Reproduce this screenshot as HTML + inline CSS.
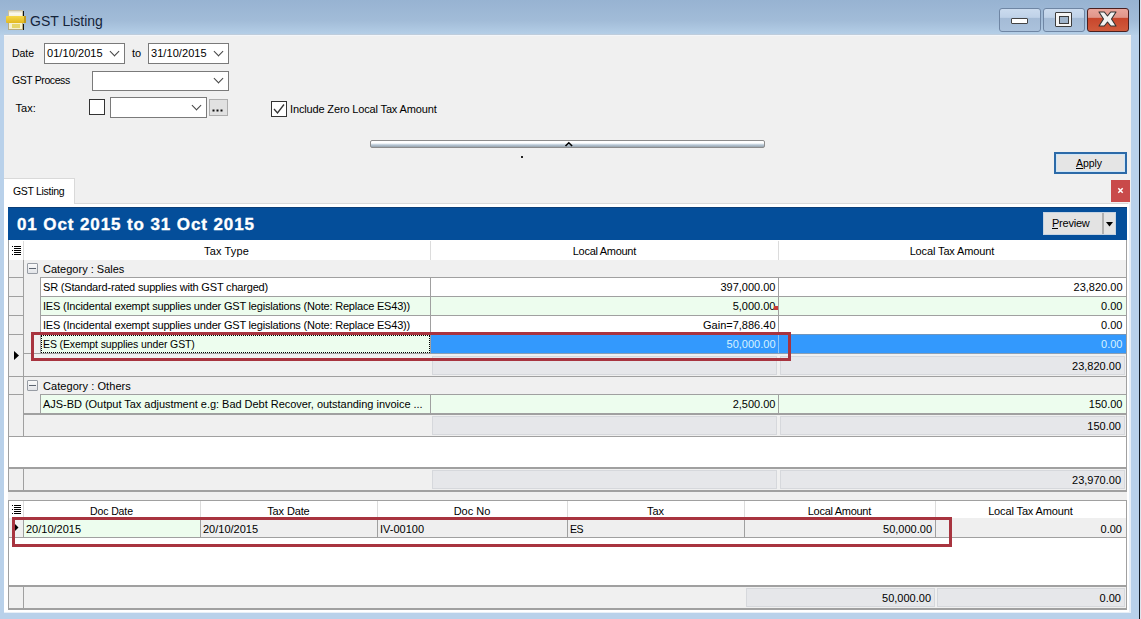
<!DOCTYPE html>
<html><head><meta charset="utf-8">
<style>
*{margin:0;padding:0;box-sizing:border-box}
html,body{width:1141px;height:619px;overflow:hidden;background:#b9d1ea;font-family:"Liberation Sans",sans-serif;font-size:11px;color:#000}
.a{position:absolute}
.t{position:absolute;white-space:nowrap;line-height:13px}
#title{left:0;top:0;width:1141px;height:35px;background:linear-gradient(#97b3d2,#a2bcd8 60%,#b6d0e8)}
#client{left:4px;top:35px;width:1127px;height:578px;background:#f0f0f0}
.box{position:absolute;background:#fff;border:1px solid #7a7a7a}
.chev{position:absolute;width:7px;height:7px;border-right:1px solid #444;border-bottom:1px solid #444;transform:rotate(45deg)}
.hl{position:absolute;height:1px;background:#a0a0a0}
.vl{position:absolute;width:1px;background:#a0a0a0}
.r{text-align:right}.c{text-align:center}
.sum{position:absolute;background:#e8e8e8;border:1px solid #d6d6d6}
</style></head><body><div id="title" class="a"></div>
<div id="client" class="a"></div>
<div class="a" style="left:1139px;top:0px;width:1px;height:619px;background:#141c26"></div>
<div class="a" style="left:1140px;top:0px;width:1px;height:619px;background:#dfe6ee"></div>
<div class="a" style="left:4px;top:34px;width:1127px;height:1px;background:#bfcddc"></div>
<div class="a" style="left:4px;top:35px;width:1127px;height:1px;background:#f3f6fa"></div>
<div class="a" style="left:8px;top:10px;width:15px;height:7px;background:linear-gradient(#dcd6c0,#fbf8ea 40%,#f4f0dc);border:1px solid #c8c0a0;border-bottom:none"></div>
<div class="a" style="left:23px;top:11px;width:1px;height:5px;background:#111"></div>
<div class="a" style="left:8px;top:22px;width:15px;height:8px;background:#f6f1cf;border:1px solid #b8ac80"></div>
<div class="a" style="left:12px;top:24px;width:8px;height:4px;background:#e6d66a"></div>
<div class="a" style="left:23px;top:24px;width:1px;height:6px;background:#111"></div>
<div class="a" style="left:6px;top:16px;width:20px;height:7px;background:linear-gradient(#f6d848,#e2b820);border-radius:1px"></div>
<div class="a" style="left:24px;top:16px;width:2px;height:7px;background:#c09a22"></div>
<div class="t" style="left:30px;top:13px;font-size:14px;line-height:17px;color:#15243a">GST Listing</div>
<div class="a" style="left:999px;top:8px;width:42px;height:24px;border:1px solid #6f86a4;border-radius:3px;background:linear-gradient(#cbdbee 0,#bfd2e8 38%,#a4bbd6 42%,#abc2dc 100%)"></div>
<div class="a" style="left:1011px;top:18px;width:17px;height:6px;background:#fff;border:1px solid #444;border-radius:1px"></div>
<div class="a" style="left:1043px;top:8px;width:42px;height:24px;border:1px solid #6f86a4;border-radius:3px;background:linear-gradient(#cbdbee 0,#bfd2e8 38%,#a4bbd6 42%,#abc2dc 100%)"></div>
<div class="a" style="left:1055px;top:12px;width:17px;height:15px;background:#f4f4f4;border:1px solid #3c3c3c;border-radius:1px"></div>
<div class="a" style="left:1059px;top:16px;width:10px;height:8px;background:#9fb4cb;border:1px solid #3c3c3c"></div>
<div class="a" style="left:1087px;top:8px;width:42px;height:24px;border:1px solid #4a2020;border-radius:3px;background:linear-gradient(#eaa69c 0,#e0968a 38%,#c8462c 42%,#d05a3c 100%)"></div>
<svg class="a" style="left:1098px;top:11px" width="19" height="16"><path d="M1 1 L6.3 1 L9.5 5 L12.7 1 L18 1 L13.5 8 L18 15 L12.7 15 L9.5 11 L6.3 15 L1 15 L5.5 8 Z" fill="#f2f2f2" stroke="#333" stroke-width="1.1" stroke-linejoin="round"/></svg>
<div class="t" style="left:12px;top:47px;letter-spacing:-0.026px;font-size:10.5px;">Date</div>
<div class="box" style="left:44px;top:43px;width:81px;height:21px"></div>
<div class="t" style="left:47px;top:47px;letter-spacing:0.061px;">01/10/2015</div>
<div class="chev" style="left:111px;top:48px"></div>
<div class="t" style="left:132px;top:47px;">to</div>
<div class="box" style="left:148px;top:43px;width:81px;height:21px"></div>
<div class="t" style="left:151px;top:47px;letter-spacing:0.061px;">31/10/2015</div>
<div class="chev" style="left:215px;top:48px"></div>
<div class="t" style="left:12px;top:74px;letter-spacing:-0.403px;font-size:10.5px;">GST Process</div>
<div class="box" style="left:92px;top:71px;width:137px;height:20px"></div>
<div class="chev" style="left:215px;top:75px"></div>
<div class="t" style="left:15.5px;top:102px;letter-spacing:0.075px;">Tax:</div>
<div class="box" style="left:89px;top:99px;width:16px;height:16px;border-color:#333"></div>
<div class="box" style="left:110px;top:97px;width:97px;height:21px"></div>
<div class="chev" style="left:193px;top:102px"></div>
<div class="a" style="left:209px;top:99px;width:19px;height:17px;background:#e1e1e1;border:1px solid #adadad"></div>
<svg class="a" style="left:209px;top:99px" width="19" height="17"><path d="M3.5 11.5h2M7.5 11.5h2M11.5 11.5h2" stroke="#111" stroke-width="2"/></svg>
<div class="box" style="left:271px;top:101px;width:16px;height:16px;border-color:#333"></div>
<svg class="a" style="left:271px;top:101px" width="16" height="16"><path d="M3 8 L6.5 12 L13 3.5" stroke="#333" stroke-width="1.3" fill="none"/></svg>
<div class="t" style="left:290px;top:103px;letter-spacing:-0.148px;">Include Zero Local Tax Amount</div>
<div class="a" style="left:370px;top:140px;width:395px;height:8px;border:1px solid #8c8c8c;border-radius:2px;background:linear-gradient(#fff 0,#fff 35%,#b8c8d6 65%,#98a4ae 100%)"></div>
<svg class="a" style="left:564px;top:141px" width="10" height="6"><path d="M1.5 5 L4.8 1.8 L8.1 5" stroke="#000" stroke-width="1.6" fill="none"/></svg>
<div class="a" style="left:521px;top:156px;width:2px;height:2px;background:#222"></div>
<div class="a" style="left:1054px;top:152px;width:73px;height:22px;border:2px solid #2c6aa8;background:#e5e5e5;box-shadow:inset 0 0 0 1px #cfe6f8"></div>
<div class="t" style="left:1076px;top:157px;letter-spacing:-0.066px;font-size:10.5px;">Apply</div>
<div class="a" style="left:1076px;top:168px;width:7px;height:1px;background:#000"></div>
<div class="a" style="left:4px;top:178px;width:71px;height:26px;background:#fff;border:1px solid #d9d9d9;border-bottom:none;border-left:none"></div>
<div class="t" style="left:13px;top:185px;letter-spacing:-0.315px;font-size:10.5px;">GST Listing</div>
<div class="a" style="left:1111px;top:180px;width:19px;height:22px;background:#c94a4a"></div>
<svg class="a" style="left:1111px;top:180px" width="19" height="22"><path d="M7.3 8.3 L11.7 12.7 M11.7 8.3 L7.3 12.7" stroke="#fff" stroke-width="1.5"/></svg>
<div class="a" style="left:75px;top:203px;width:1053px;height:1px;background:#d9d9d9"></div>
<div class="a" style="left:4px;top:204px;width:1125px;height:408px;background:#fff"></div>
<div class="a" style="left:1129px;top:204px;width:2px;height:409px;background:#e8eff7"></div>
<div class="a" style="left:4px;top:612px;width:1125px;height:1px;background:#e8eff7"></div>
<div class="a" style="left:8px;top:207px;width:1119px;height:33px;background:#044e9a;border-top:1px solid #0a3e78"></div>
<div class="t" style="left:17px;top:215px;letter-spacing:0.899px;font-size:17px;line-height:20px;font-weight:bold;color:#fff;-webkit-text-stroke:0.35px #fff">01 Oct 2015 to 31 Oct 2015</div>
<div class="a" style="left:1043px;top:212px;width:73px;height:23px;background:#e3e3e3;border:1px solid #c5d3e2"></div>
<div class="a" style="left:1102px;top:213px;width:2px;height:21px;background:#b0b0b0"></div>
<div class="t" style="left:1052px;top:217px;letter-spacing:-0.221px;">Preview</div>
<div class="a" style="left:1052px;top:228px;width:6px;height:1px;background:#000"></div>
<svg class="a" style="left:1106px;top:222px" width="8" height="5"><path d="M0 0 H7 L3.5 4.5 Z" fill="#000"/></svg>
<div class="a" style="left:8px;top:240px;width:1119px;height:252px;background:#fff"></div>
<div class="a" style="left:8px;top:240px;width:1px;height:252px;background:#a0a0a0"></div>
<div class="a" style="left:1126px;top:240px;width:1px;height:252px;background:#a0a0a0"></div>
<div class="a" style="left:23px;top:241px;width:1px;height:19px;background:#dcdcdc"></div>
<div class="a" style="left:430px;top:241px;width:1px;height:19px;background:#dcdcdc"></div>
<div class="a" style="left:778px;top:241px;width:1px;height:19px;background:#dcdcdc"></div>
<svg class="a" style="left:12px;top:246px" width="10" height="10"><path d="M2 0.5h7M2 2.5h7M2 4.5h7M2 6.5h7M2 8.5h7" stroke="#000" stroke-width="1"/><path d="M0 0.5h1M0 4.5h1M0 8.5h1" stroke="#000" stroke-width="1"/></svg>
<div class="t c" style="left:26.570px;width:400px;top:245px;letter-spacing:0.140px;">Tax Type</div>
<div class="t c" style="left:404.352px;width:400px;top:245px;letter-spacing:-0.297px;">Local Amount</div>
<div class="t c" style="left:751.935px;width:400px;top:245px;letter-spacing:-0.129px;">Local Tax Amount</div>
<div class="a" style="left:9px;top:260px;width:1117px;height:18px;background:#f0f0f0"></div>
<div class="a" style="left:23px;top:260px;width:1px;height:18px;background:#a0a0a0"></div>
<div class="a" style="left:9px;top:277px;width:14px;height:1px;background:#a0a0a0"></div>
<div class="a" style="left:27px;top:263px;width:11px;height:11px;border:1px solid #979ca4;border-radius:1px;background:linear-gradient(#fafafa,#e2e4e8)"></div>
<div class="a" style="left:29px;top:268px;width:7px;height:1px;background:#5c6470"></div>
<div class="t" style="left:43px;top:263px;">Category : Sales</div>
<div class="a" style="left:24px;top:277px;width:1102px;height:1px;background:#a0a0a0"></div>
<div class="a" style="left:9px;top:278px;width:14px;height:18px;background:#f0f0f0"></div>
<div class="a" style="left:9px;top:296px;width:14px;height:1px;background:#a0a0a0"></div>
<div class="a" style="left:23px;top:277px;width:1px;height:19px;background:#a0a0a0"></div>
<div class="a" style="left:24px;top:277px;width:16px;height:19px;background:#f0f0f0"></div>
<div class="a" style="left:41px;top:278px;width:389px;height:18px;background:#fff"></div>
<div class="a" style="left:431px;top:278px;width:347px;height:18px;background:#fff"></div>
<div class="a" style="left:779px;top:278px;width:347px;height:18px;background:#fff"></div>
<div class="a" style="left:40px;top:277px;width:1px;height:19px;background:#a0a0a0"></div>
<div class="a" style="left:430px;top:277px;width:1px;height:19px;background:#a0a0a0"></div>
<div class="a" style="left:778px;top:277px;width:1px;height:19px;background:#a0a0a0"></div>
<div class="a" style="left:40px;top:296px;width:1086px;height:1px;background:#a0a0a0"></div>
<div class="t" style="left:43px;top:281px;letter-spacing:-0.185px;">SR (Standard-rated supplies with GST charged)</div>
<div class="t r" style="right:365.500px;top:281px;">397,000.00</div>
<div class="t r" style="right:18.500px;top:281px;">23,820.00</div>
<div class="a" style="left:9px;top:297px;width:14px;height:18px;background:#f0f0f0"></div>
<div class="a" style="left:9px;top:315px;width:14px;height:1px;background:#a0a0a0"></div>
<div class="a" style="left:23px;top:296px;width:1px;height:19px;background:#a0a0a0"></div>
<div class="a" style="left:24px;top:296px;width:16px;height:19px;background:#f0f0f0"></div>
<div class="a" style="left:41px;top:297px;width:389px;height:18px;background:#edfdee"></div>
<div class="a" style="left:431px;top:297px;width:347px;height:18px;background:#edfdee"></div>
<div class="a" style="left:779px;top:297px;width:347px;height:18px;background:#edfdee"></div>
<div class="a" style="left:40px;top:296px;width:1px;height:19px;background:#a0a0a0"></div>
<div class="a" style="left:430px;top:296px;width:1px;height:19px;background:#a0a0a0"></div>
<div class="a" style="left:778px;top:296px;width:1px;height:19px;background:#a0a0a0"></div>
<div class="a" style="left:40px;top:315px;width:1086px;height:1px;background:#a0a0a0"></div>
<div class="t" style="left:43px;top:300px;letter-spacing:-0.196px;">IES (Incidental exempt supplies under GST legislations (Note: Replace ES43))</div>
<div class="t r" style="right:365.500px;top:300px;">5,000.00</div>
<div class="t r" style="right:18.500px;top:300px;">0.00</div>
<div class="a" style="left:9px;top:316px;width:14px;height:18px;background:#f0f0f0"></div>
<div class="a" style="left:9px;top:334px;width:14px;height:1px;background:#a0a0a0"></div>
<div class="a" style="left:23px;top:315px;width:1px;height:19px;background:#a0a0a0"></div>
<div class="a" style="left:24px;top:315px;width:16px;height:19px;background:#f0f0f0"></div>
<div class="a" style="left:41px;top:316px;width:389px;height:18px;background:#fff"></div>
<div class="a" style="left:431px;top:316px;width:347px;height:18px;background:#fff"></div>
<div class="a" style="left:779px;top:316px;width:347px;height:18px;background:#fff"></div>
<div class="a" style="left:40px;top:315px;width:1px;height:19px;background:#a0a0a0"></div>
<div class="a" style="left:430px;top:315px;width:1px;height:19px;background:#a0a0a0"></div>
<div class="a" style="left:778px;top:315px;width:1px;height:19px;background:#a0a0a0"></div>
<div class="a" style="left:40px;top:334px;width:1086px;height:1px;background:#a0a0a0"></div>
<div class="t" style="left:43px;top:319px;letter-spacing:-0.196px;">IES (Incidental exempt supplies under GST legislations (Note: Replace ES43))</div>
<div class="t r" style="right:365.500px;top:319px;">Gain=7,886.40</div>
<div class="t r" style="right:18.500px;top:319px;">0.00</div>
<div class="a" style="left:9px;top:335px;width:14px;height:19px;background:#f0f0f0"></div>
<div class="a" style="left:23px;top:334px;width:1px;height:19px;background:#a0a0a0"></div>
<div class="a" style="left:24px;top:334px;width:16px;height:19px;background:#f0f0f0"></div>
<div class="a" style="left:41px;top:335px;width:389px;height:18px;background:#edfdee"></div>
<div class="a" style="left:431px;top:335px;width:347px;height:18px;background:#3399fd"></div>
<div class="a" style="left:779px;top:335px;width:347px;height:18px;background:#3399fd"></div>
<div class="a" style="left:40px;top:334px;width:1px;height:19px;background:#a0a0a0"></div>
<div class="a" style="left:430px;top:334px;width:1px;height:19px;background:#a0a0a0"></div>
<div class="a" style="left:778px;top:334px;width:1px;height:19px;background:#a0a0a0"></div>
<div class="a" style="left:24px;top:353px;width:1102px;height:1px;background:#a0a0a0"></div>
<div class="a" style="left:778px;top:335px;width:1px;height:18px;background:#8cc4f8"></div>
<div class="a" style="left:431px;top:334px;width:695px;height:1px;background:#6f95bd"></div>
<div class="a" style="left:431px;top:353px;width:695px;height:1px;background:#8a9fb5"></div>
<div class="t" style="left:43px;top:338px;letter-spacing:-0.118px;font-size:10.5px;">ES (Exempt supplies under GST)</div>
<div class="t r" style="right:365.500px;top:338px;color:#d6f2ff">50,000.00</div>
<div class="t r" style="right:18.500px;top:338px;color:#d6f2ff">0.00</div>
<div class="a" style="left:41px;top:335px;width:389px;height:18px;border:1px dotted #000"></div>
<div class="a" style="left:774px;top:306px;width:4px;height:4px;background:#c83c3c"></div>
<div class="a" style="left:9px;top:354px;width:1117px;height:23px;background:#f0f0f0"></div>
<div class="a" style="left:23px;top:353px;width:1px;height:24px;background:#a0a0a0"></div>
<div class="a" style="left:432px;top:356px;width:345px;height:19px;background:#e6e7ea;border:1px solid #d6d8dc"></div>
<div class="a" style="left:780px;top:356px;width:345px;height:19px;background:#e6e7ea;border:1px solid #d6d8dc"></div>
<div class="t r" style="right:20.000px;top:360px;">23,820.00</div>
<div class="a" style="left:9px;top:376px;width:1117px;height:1px;background:#a0a0a0"></div>
<div class="a" style="left:9px;top:377px;width:1117px;height:18px;background:#f0f0f0"></div>
<div class="a" style="left:23px;top:377px;width:1px;height:18px;background:#a0a0a0"></div>
<div class="a" style="left:9px;top:394px;width:14px;height:1px;background:#a0a0a0"></div>
<div class="a" style="left:27px;top:380px;width:11px;height:11px;border:1px solid #979ca4;border-radius:1px;background:linear-gradient(#fafafa,#e2e4e8)"></div>
<div class="a" style="left:29px;top:385px;width:7px;height:1px;background:#5c6470"></div>
<div class="t" style="left:43px;top:380px;letter-spacing:0.062px;">Category : Others</div>
<div class="a" style="left:24px;top:394px;width:1102px;height:1px;background:#a0a0a0"></div>
<div class="a" style="left:9px;top:395px;width:14px;height:19px;background:#f0f0f0"></div>
<div class="a" style="left:23px;top:394px;width:1px;height:20px;background:#a0a0a0"></div>
<div class="a" style="left:24px;top:394px;width:16px;height:20px;background:#f0f0f0"></div>
<div class="a" style="left:41px;top:395px;width:389px;height:19px;background:#edfdee"></div>
<div class="a" style="left:431px;top:395px;width:347px;height:19px;background:#edfdee"></div>
<div class="a" style="left:779px;top:395px;width:347px;height:19px;background:#edfdee"></div>
<div class="a" style="left:40px;top:394px;width:1px;height:20px;background:#a0a0a0"></div>
<div class="a" style="left:430px;top:394px;width:1px;height:20px;background:#a0a0a0"></div>
<div class="a" style="left:778px;top:394px;width:1px;height:20px;background:#a0a0a0"></div>
<div class="t" style="left:43px;top:398px;letter-spacing:-0.031px;">AJS-BD (Output Tax adjustment e.g: Bad Debt Recover, outstanding invoice ...</div>
<div class="t r" style="right:365.500px;top:398px;">2,500.00</div>
<div class="t r" style="right:18.500px;top:398px;">150.00</div>
<div class="a" style="left:9px;top:413px;width:14px;height:2px;background:#f0f0f0"></div>
<div class="a" style="left:23px;top:413px;width:1103px;height:2px;background:#a0a0a0"></div>
<div class="a" style="left:9px;top:415px;width:1117px;height:21px;background:#f0f0f0"></div>
<div class="a" style="left:23px;top:415px;width:1px;height:21px;background:#a0a0a0"></div>
<div class="a" style="left:432px;top:416px;width:345px;height:19px;background:#e6e7ea;border:1px solid #d6d8dc"></div>
<div class="a" style="left:780px;top:416px;width:345px;height:19px;background:#e6e7ea;border:1px solid #d6d8dc"></div>
<div class="t r" style="right:20.000px;top:420px;">150.00</div>
<div class="a" style="left:9px;top:436px;width:1117px;height:1px;background:#a0a0a0"></div>
<div class="a" style="left:8px;top:467px;width:1119px;height:2px;background:#a0a0a0"></div>
<div class="a" style="left:9px;top:469px;width:1117px;height:22px;background:#f0f0f0"></div>
<div class="a" style="left:23px;top:469px;width:1px;height:22px;background:#a0a0a0"></div>
<div class="a" style="left:432px;top:470px;width:345px;height:19px;background:#e6e7ea;border:1px solid #d6d8dc"></div>
<div class="a" style="left:780px;top:470px;width:345px;height:19px;background:#e6e7ea;border:1px solid #d6d8dc"></div>
<div class="t r" style="right:20.000px;top:474px;">23,970.00</div>
<div class="a" style="left:8px;top:490px;width:1119px;height:2px;background:#a0a0a0"></div>
<div class="a" style="left:8px;top:492px;width:1119px;height:8px;background:#efefef"></div>
<div class="a" style="left:8px;top:500px;width:1119px;height:110px;background:#fff"></div>
<div class="a" style="left:8px;top:500px;width:1119px;height:1px;background:#a0a0a0"></div>
<div class="a" style="left:8px;top:500px;width:1px;height:110px;background:#a0a0a0"></div>
<div class="a" style="left:1126px;top:500px;width:1px;height:110px;background:#a0a0a0"></div>
<div class="a" style="left:23px;top:501px;width:1px;height:17px;background:#dcdcdc"></div>
<div class="a" style="left:200px;top:501px;width:1px;height:17px;background:#dcdcdc"></div>
<div class="a" style="left:377px;top:501px;width:1px;height:17px;background:#dcdcdc"></div>
<div class="a" style="left:567px;top:501px;width:1px;height:17px;background:#dcdcdc"></div>
<div class="a" style="left:744px;top:501px;width:1px;height:17px;background:#dcdcdc"></div>
<div class="a" style="left:935px;top:501px;width:1px;height:17px;background:#dcdcdc"></div>
<svg class="a" style="left:12px;top:505px" width="10" height="10"><path d="M2 0.5h7M2 2.5h7M2 4.5h7M2 6.5h7M2 8.5h7" stroke="#000" stroke-width="1"/><path d="M0 0.5h1M0 4.5h1M0 8.5h1" stroke="#000" stroke-width="1"/></svg>
<div class="t c" style="left:-88.555px;width:400px;top:505px;letter-spacing:-0.110px;font-size:10.5px;">Doc Date</div>
<div class="t c" style="left:88.435px;width:400px;top:505px;letter-spacing:-0.130px;">Tax Date</div>
<div class="t c" style="left:272.000px;width:400px;top:505px;">Doc No</div>
<div class="t c" style="left:455.421px;width:400px;top:505px;letter-spacing:-0.159px;">Tax</div>
<div class="t c" style="left:639.352px;width:400px;top:505px;letter-spacing:-0.297px;">Local Amount</div>
<div class="t c" style="left:830.435px;width:400px;top:505px;letter-spacing:-0.129px;">Local Tax Amount</div>
<div class="a" style="left:9px;top:518px;width:14px;height:19px;background:#f0f0f0"></div>
<div class="a" style="left:24px;top:518px;width:176px;height:19px;background:#edfdee"></div>
<div class="a" style="left:201px;top:518px;width:925px;height:19px;background:#efefef"></div>
<div class="a" style="left:23px;top:518px;width:1px;height:19px;background:#a0a0a0"></div>
<div class="a" style="left:200px;top:518px;width:1px;height:19px;background:#a0a0a0"></div>
<div class="a" style="left:377px;top:518px;width:1px;height:19px;background:#a0a0a0"></div>
<div class="a" style="left:567px;top:518px;width:1px;height:19px;background:#a0a0a0"></div>
<div class="a" style="left:744px;top:518px;width:1px;height:19px;background:#a0a0a0"></div>
<div class="a" style="left:935px;top:518px;width:1px;height:19px;background:#a0a0a0"></div>
<div class="a" style="left:9px;top:537px;width:1117px;height:1px;background:#a0a0a0"></div>
<svg class="a" style="left:14px;top:523px" width="5" height="9"><path d="M0 0 L4.5 4.5 L0 9Z" fill="#000"/></svg>
<div class="t" style="left:26px;top:523px;letter-spacing:-0.006px;">20/10/2015</div>
<div class="t" style="left:203px;top:523px;letter-spacing:-0.006px;">20/10/2015</div>
<div class="t" style="left:380px;top:523px;">IV-00100</div>
<div class="t" style="left:570px;top:523px;letter-spacing:-0.507px;font-size:10.5px;">ES</div>
<div class="t r" style="right:209.000px;top:523px;">50,000.00</div>
<div class="t r" style="right:19.000px;top:523px;">0.00</div>
<div class="a" style="left:8px;top:585px;width:1119px;height:2px;background:#a0a0a0"></div>
<div class="a" style="left:9px;top:587px;width:1117px;height:21px;background:#f0f0f0"></div>
<div class="a" style="left:23px;top:587px;width:1px;height:21px;background:#a0a0a0"></div>
<div class="a" style="left:746px;top:588px;width:189px;height:19px;background:#e6e7ea;border:1px solid #d6d8dc"></div>
<div class="a" style="left:937px;top:588px;width:188px;height:19px;background:#e6e7ea;border:1px solid #d6d8dc"></div>
<div class="t r" style="right:210.000px;top:592px;">50,000.00</div>
<div class="t r" style="right:20.000px;top:592px;">0.00</div>
<div class="a" style="left:8px;top:608px;width:1119px;height:2px;background:#a0a0a0"></div>
<div class="a" style="left:31px;top:332px;width:760px;height:29px;border:3px solid #a8343f"></div>
<div class="a" style="left:12px;top:517px;width:940px;height:30px;border:3px solid #a8343f"></div>
<svg class="a" style="left:14px;top:351px" width="6" height="10"><path d="M0 0 L5 4.5 L0 9Z" fill="#000"/></svg>
</body></html>
